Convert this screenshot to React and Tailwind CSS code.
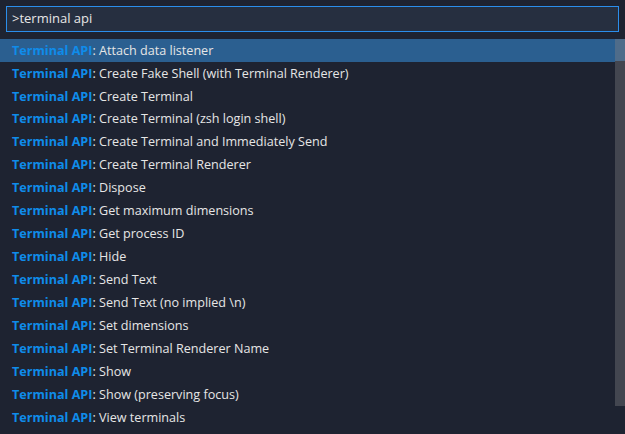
import React from "react";

const items = [
  "Attach data listener",
  "Create Fake Shell (with Terminal Renderer)",
  "Create Terminal",
  "Create Terminal (zsh login shell)",
  "Create Terminal and Immediately Send",
  "Create Terminal Renderer",
  "Dispose",
  "Get maximum dimensions",
  "Get process ID",
  "Hide",
  "Send Text",
  "Send Text (no implied \\n)",
  "Set dimensions",
  "Set Terminal Renderer Name",
  "Show",
  "Show (preserving focus)",
  "View terminals",
];

export default function App() {
  return (
    <div
      className="w-[625px] h-[434px] bg-[#1e2331] overflow-hidden relative"
      style={{ fontFamily: '"Open Sans", "Noto Sans", sans-serif' }}
    >
      <div className="pt-[6px] pl-[6px] pr-[6px]">
        <div className="h-[26px] border border-[#2b8eec] bg-[#262f40] flex items-center pl-[5px] text-[13px] text-[#e6e6e6]">
          &gt;terminal api
        </div>
      </div>
      <div className="mt-[7px] relative">
        {items.map((t, i) => (
          <div
            key={i}
            className={
              "h-[22.95px] flex items-center pl-[12px] pt-[1px] text-[12.6px] leading-none text-[#e6e6e6] w-[615px] " +
              (i === 0 ? "bg-[#2b5f90]" : "")
            }
          >
            <span className="font-bold text-[#0f8cea]">Terminal API</span>
            <span>: {t}</span>
          </div>
        ))}
        <div className="absolute right-0 top-0 w-[10px] h-[367px] bg-[#434650]">
          <div className="h-[22px] bg-[#4f6c8a]" />
        </div>
      </div>
    </div>
  );
}
